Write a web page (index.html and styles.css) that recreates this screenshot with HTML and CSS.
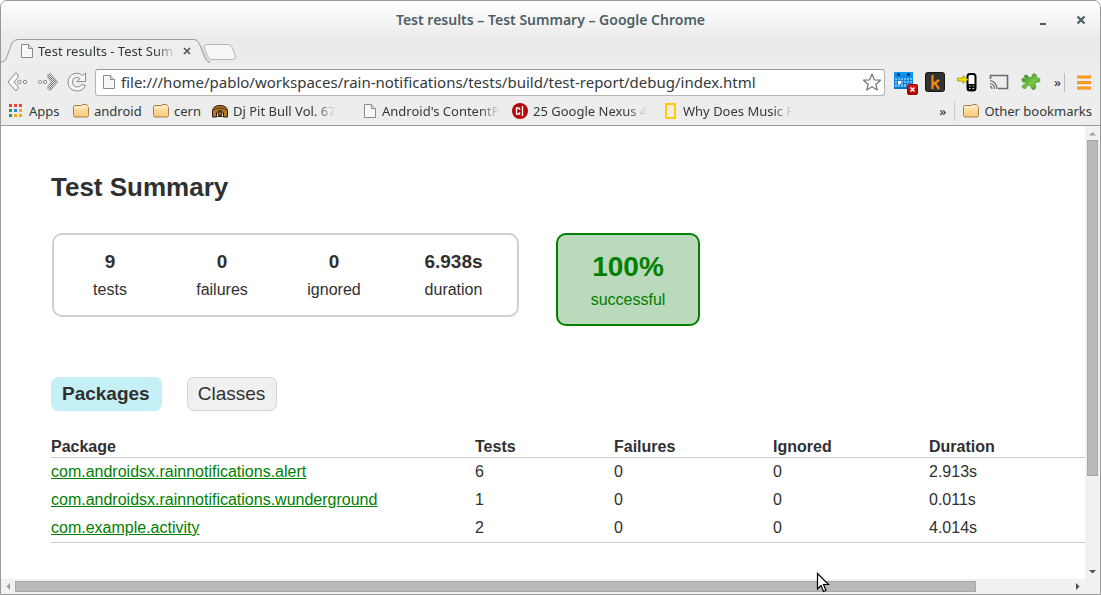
FILE: index.html
```html
<!DOCTYPE html>
<html lang="en">
<head>
<meta charset="utf-8">
<title>Test results - Test Summary</title>
<link rel="stylesheet" href="styles.css">
</head>
<body>
<svg class="defs" width="0" height="0" aria-hidden="true">
  <defs>
    <linearGradient id="folderFill" x1="0" y1="0" x2="0" y2="1"><stop offset="0" stop-color="#ffe9bd"/><stop offset="1" stop-color="#f9c877"/></linearGradient>
    <linearGradient id="greenFill" x1="0" y1="0" x2="1" y2="1"><stop offset="0" stop-color="#2f8a26"/><stop offset=".55" stop-color="#7cc843"/><stop offset="1" stop-color="#3e9a2f"/></linearGradient>
    <linearGradient id="calFill" x1="0" y1="0" x2="0" y2="1"><stop offset="0" stop-color="#0a98f5"/><stop offset="1" stop-color="#0a6fcf"/></linearGradient>
    <linearGradient id="badgeFill" x1="0" y1="0" x2="0" y2="1"><stop offset="0" stop-color="#e21a1a"/><stop offset="1" stop-color="#a80000"/></linearGradient>
    <pattern id="checker" width="2" height="2" patternUnits="userSpaceOnUse"><rect width="2" height="2" fill="#e6e6e6"/><rect width="1" height="1" fill="#777"/><rect x="1" y="1" width="1" height="1" fill="#777"/></pattern>
    <symbol id="folder" viewBox="0 0 16 14">
      <path d="M.5 11.500V2.500Q.5 1.500 1.500 1.500H8.500L9.500.5H13.500L14.500 1.500V2.500Q15.500 2.500 15.500 3.500V11.500Q15.500 13 14 13H2Q.5 13 .5 11.500Z" fill="url(#folderFill)" stroke="#a2814c"/>
      <path d="M1.500 3.500H9L10.500 2.500H14.500" fill="none" stroke="#fff3d8"/>
    </symbol>
    <symbol id="page" viewBox="0 0 12 14">
      <path d="M.5.5H7.500L11.500 4.500V13.500H.5Z" fill="#f8f8f8" stroke="#8b8b8b"/>
      <path d="M7.500.5V4.500H11.500" fill="#ddd" stroke="#8b8b8b"/>
    </symbol>
  </defs>
</svg>
<div class="window">
  <header class="titlebar">
    <div class="window-title">Test results – Test Summary – Google Chrome</div>
    <div class="window-controls">
      <button class="plain" aria-label="Minimize"><svg width="8" height="10"><path d="M1 9H7" stroke="#455a64" stroke-width="2"/></svg></button>
      <button class="plain" aria-label="Close window"><svg width="10" height="10"><path d="M1.500 1.500L8.500 8.500M8.500 1.500L1.500 8.500" stroke="#52636b" stroke-width="2.400"/></svg></button>
    </div>
  </header>

  <div class="tabstrip">
    <div class="browser-tab">
      <svg class="tab-shape" width="210" height="25" viewBox="0 0 210 25">
        <path d="M0 25Q4 24 5 21L11 5Q13 1.500 17 1.500H193Q196 1.500 198 5L204 20Q206 24 209 25Z" fill="#eeeeee"/>
        <path d="M0 24Q4 24 5 21L11 5Q13 1.500 17 1.500H193Q196 1.500 198 5L204 20Q206 24.500 209 24.500" fill="none" stroke="#999"/>
        <path d="M200 7L205 19Q207 23.500 210 23.500" fill="none" stroke="#c8c8c8"/>
      </svg>
      <svg class="tab-icon" width="12" height="14"><use href="#page"/></svg>
      <span class="tab-title fade">Test results - Test Sum</span>
      <button class="plain tab-close" aria-label="Close tab"><svg width="8" height="8"><path d="M1 1L7 7M7 1L1 7" stroke="#555" stroke-width="1.700"/></svg></button>
    </div>
    <button class="plain new-tab" aria-label="New tab"><svg width="34" height="18" viewBox="0 0 34 18"><path d="M4 1.500H25Q28 1.500 29 4L32.500 13Q33 16.500 30 16.500H9Q6 16.500 5 14L1.500 5Q.5 1.500 4 1.500Z" fill="#f7f7f7" stroke="#b5b5b5"/></svg></button>
  </div>

  <div class="toolbar">
    <button class="plain" aria-label="Back"><svg width="22" height="20" viewBox="0 0 22 20"><path d="M9 .8L1 10L9 19L11 16.500V14.500L7 10L11 5.500V3Z" fill="#fafafa" stroke="#858585"/><circle cx="12.500" cy="10" r="1.700" fill="#fff" stroke="#888"/><circle cx="18" cy="10" r="1.700" fill="#fff" stroke="#888"/></svg></button>
    <button class="plain" aria-label="Forward"><svg width="22" height="20" viewBox="0 0 22 20"><path d="M13 .8L21 10L13 19L10.500 16.500V14.500L14 10L10.500 5.500V3Z" fill="url(#checker)" stroke="#a5a5a5" stroke-width=".6"/><circle cx="3" cy="10" r="1.700" fill="#eee" stroke="#999"/><circle cx="8" cy="10" r="1.700" fill="#eee" stroke="#888"/></svg></button>
    <button class="plain" aria-label="Reload"><svg width="20" height="20" viewBox="0 0 20 20"><path d="M15.500 3.500L18.500 1V9.500H10L13 6.500Q9.500 4 6.500 6.500Q4 10 6.500 13.500Q11 17 15 12.500L18.500 13.500Q16 19 10 19Q1 18 1 10Q2 2 9.500 1.200Q13 1 15.500 3.500Z" fill="#f7f7f7" stroke="#8c8c8c" stroke-linejoin="round"/></svg></button>
    <div class="omnibox">
      <svg width="12" height="14"><use href="#page"/></svg>
      <input class="url" type="text" aria-label="Address" value="file:///home/pablo/workspaces/rain-notifications/tests/build/test-report/debug/index.html">
      <button class="plain" aria-label="Bookmark this page"><svg width="20" height="18" viewBox="0 0 20 18"><path d="M10 1L12.300 6.800L18.500 7.200L13.700 11.200L15.300 17L10 13.800L4.700 17L6.300 11.200L1.500 7.200L7.700 6.800Z" fill="#fff" stroke="#777" stroke-width="1.200" stroke-linejoin="round"/></svg></button>
    </div>
    <div class="extensions">
      <button class="plain calendar" aria-label="Calendar"><svg width="26" height="24" viewBox="0 0 26 24"><path d="M1 1H20V18H1Z" fill="url(#calFill)"/><path d="M2 7H19V16H2Z" fill="#69c3f8"/><path d="M2 9.500H19M2 12.500H19M4.500 7V16M7.500 7V16M10.500 7V16M13.500 7V16M16.500 7V16" stroke="#1680d6"/><path d="M5 10H8V13H5Z" fill="#fff"/><circle cx="5.500" cy="3.500" r="1.500" fill="#12365a"/><circle cx="15.500" cy="3.500" r="1.500" fill="#12365a"/><rect x="14.500" y="13.500" width="10" height="10" rx="1.500" fill="url(#badgeFill)" stroke="#a40000"/><path d="M17.500 16.500L21.500 20.500M21.500 16.500L17.500 20.500" stroke="#fff" stroke-width="1.500"/></svg></button>
      <button class="plain" aria-label="k extension"><svg width="20" height="20" viewBox="0 0 20 20"><rect x=".5" y=".5" width="19" height="19" rx="2" fill="#333" stroke="#161616"/><path d="M7.500 3V17M14 8L8 12.500M10 11L14 17" fill="none" stroke="#f0860f" stroke-width="2.300"/></svg></button>
      <button class="plain" aria-label="Send to phone"><svg width="20" height="20" viewBox="0 0 20 20"><rect x="10.500" y="2" width="8" height="16.500" rx="2.500" fill="#fff" stroke="#000" stroke-width="2"/><path d="M10 12H19V17Q19 19 17 19H12Q10 19 10 17Z"/><path d="M12 14H13.500M15.500 14H17M12 16.500H13.500M15.500 16.500H17" stroke="#eee" stroke-width="1.200"/><path d="M.5 6H6V3.500L11 7.500L6 11.500V9H.5Z" fill="#f8df05" stroke="#a69200" stroke-width=".8"/></svg></button>
      <button class="plain" aria-label="Cast"><svg width="20" height="16" viewBox="0 0 20 16"><path d="M1.500 5V1.500H18.500V14.500H9" fill="none" stroke="#6b6b6b" stroke-width="1.600"/><path d="M1 6.500A8.500 8.500 0 0 1 8 15M1 9.500A5.500 5.500 0 0 1 5.500 15M1 12A3 3 0 0 1 3 15" fill="none" stroke="#666" stroke-width="1.200"/></svg></button>
      <button class="plain" aria-label="Puzzle extension"><svg width="20" height="18" viewBox="0 0 20 18"><path d="M3 3Q5 1 7 3L8 5L11 4Q11 0 14 1Q17 2 14.500 5.500Q19 4 19 7Q19 10 14.500 9L14 12Q16 14 14 16Q11 18 10 14L9 12L6 13Q5 17 2 15Q0 12 4 11.500L5 9Q1 10 .8 7Q1 4 5 6Z" fill="url(#greenFill)" stroke="#479331" stroke-width=".7"/></svg></button>
    </div>
    <div class="toolbar-end">
      <button class="plain overflow" aria-label="More extensions">»</button>
      <button class="plain menu" aria-label="Menu"><svg width="14" height="15" viewBox="0 0 14 15"><path d="M0 2H14M0 7.500H14M0 13H14" stroke="#f28b0c" stroke-width="3"/><path d="M0 2H14M0 7.500H14M0 13H14" stroke="#ffac3d"/></svg></button>
    </div>
  </div>

  <nav class="bookmarks" aria-label="Bookmarks">
    <a href="#" class="bm bm-apps"><svg width="14" height="14" viewBox="0 0 14 14"><path d="M0 0H3V3H0ZM5 0H8V3H5ZM10 0H13V3H10Z" fill="#ee4035"/><path d="M0 5H3V8H0ZM0 10H3V13H0Z" fill="#1fa05a"/><path d="M5 5H8V8H5Z" fill="#347df0"/><path d="M10 5H13V8H10ZM5 10H8V13H5ZM10 10H13V13H10Z" fill="#f6ad0c"/></svg>Apps</a>
    <a href="#" class="bm bm-android"><svg width="16" height="14"><use href="#folder"/></svg>android</a>
    <a href="#" class="bm bm-cern"><svg width="16" height="14"><use href="#folder"/></svg>cern</a>
    <a href="#" class="bm bm-dj"><svg width="16" height="13" viewBox="0 0 16 13"><path d="M.5 12V6Q1 .5 8 .5T15.500 6V12H11.500V8Q10 5.500 8 5.500T4.500 8V12Z" fill="#b7771f" stroke="#26160a"/><path d="M2 5Q8 1 14 5" fill="none" stroke="#4a2b08"/><circle cx="8" cy="8.500" r="2" fill="#a9691c" stroke="#24140a"/><path d="M5 12L7 10H9L11 12Z" fill="#2c1a0a"/></svg><span class="fade">Dj Pit Bull Vol. 67</span></a>
    <a href="#" class="bm bm-content"><svg width="12" height="14"><use href="#page"/></svg><span class="fade">Android's ContentP</span></a>
    <a href="#" class="bm bm-nexus"><svg width="16" height="16" viewBox="0 0 16 16"><circle cx="8" cy="8" r="8" fill="#b60606"/><path d="M7.500 5H4.500V11H7.500V9M7.500 5V7M10.500 3V13" fill="none" stroke="#fff" stroke-width="1.400"/></svg><span class="fade">25 Google Nexus 4</span></a>
    <a href="#" class="bm bm-music"><svg width="12" height="16" viewBox="0 0 12 16"><path d="M1 1H10V15H1Z" fill="none" stroke="#fc0" stroke-width="2"/></svg><span class="fade">Why Does Music F</span></a>
    <button class="plain overflow bm-more" aria-label="More bookmarks">»</button>
    <a href="#" class="bm bm-other"><svg width="16" height="14"><use href="#folder"/></svg>Other bookmarks</a>
  </nav>

  <div class="viewport">
    <main class="page">
      <div class="report">
        <h1>Test Summary</h1>
        <div class="summary">
          <div class="counters">
            <div class="counter"><strong>9</strong><span>tests</span></div>
            <div class="counter"><strong>0</strong><span>failures</span></div>
            <div class="counter"><strong>0</strong><span>ignored</span></div>
            <div class="counter duration"><strong>6.938s</strong><span>duration</span></div>
          </div>
          <div class="rate"><strong>100%</strong><span>successful</span></div>
        </div>
        <div class="report-tabs">
          <button class="report-tab selected">Packages</button>
          <button class="report-tab">Classes</button>
        </div>
        <table>
          <colgroup><col class="c-package"><col class="c-tests"><col class="c-failures"><col class="c-ignored"><col></colgroup>
          <thead><tr><th>Package</th><th>Tests</th><th>Failures</th><th>Ignored</th><th>Duration</th></tr></thead>
          <tbody>
            <tr><td><a href="#">com.androidsx.rainnotifications.alert</a></td><td>6</td><td>0</td><td>0</td><td>2.913s</td></tr>
            <tr><td><a href="#">com.androidsx.rainnotifications.wunderground</a></td><td>1</td><td>0</td><td>0</td><td>0.011s</td></tr>
            <tr><td><a href="#">com.example.activity</a></td><td>2</td><td>0</td><td>0</td><td>4.014s</td></tr>
          </tbody>
        </table>
      </div>
    </main>
    <div class="scroll scroll-y">
      <svg width="15" height="14"><path d="M4 9.500H11L7.500 6Z" fill="#a0a0a0"/></svg>
      <div class="track"><div class="thumb"></div></div>
      <svg width="15" height="14"><path d="M4 5H11L7.500 8.500Z" fill="#505050"/></svg>
    </div>
    <div class="scroll scroll-x">
      <svg width="14" height="15"><path d="M9 4V11L5.500 7.500Z" fill="#a0a0a0"/></svg>
      <div class="track"><div class="thumb"></div></div>
      <svg width="14" height="15"><path d="M5 4V11L8.500 7.500Z" fill="#505050"/></svg>
    </div>
    <div class="corner"></div>
  </div>
  <svg class="cursor" width="14" height="21" viewBox="0 0 14 21"><path d="M1.500 1.500V17L5 13.500L7.500 19.500L10 18.500L7.500 12.500H12.500Z" fill="#fff" stroke="#000" stroke-width="1.200"/></svg>
</div>
</body>
</html>
```
FILE: styles.css
```css
* { box-sizing: border-box; }

body {
  margin: 0;
  background: #fff;
  font-family: "Noto Sans", sans-serif;
  font-size: 13px;
  color: #33393b;
}

svg { display: block; flex: none; }
.defs { position: absolute; }

.plain {
  display: flex;
  margin: 0;
  padding: 0;
  border: 0;
  background: none;
  color: inherit;
  font: inherit;
}

.window {
  position: relative;
  display: flex;
  flex-direction: column;
  height: 100vh;
  overflow: hidden;
  border: 1px solid #999;
  border-radius: 7px 7px 0 0;
  background: #ededed;
}

.titlebar {
  display: grid;
  grid-template-columns: 1fr auto 1fr;
  align-items: center;
  height: 37px;
  background: linear-gradient(#fff, #ebebeb);
}
.window-title {
  grid-column: 2;
  color: #4d5f67;
  font-size: 14px;
  font-weight: 600;
}
.window-controls {
  display: flex;
  justify-content: flex-end;
  gap: 29px;
  padding-right: 14px;
}

.tabstrip {
  display: flex;
  height: 25px;
  background: #ebebeb;
}
.browser-tab {
  position: relative;
  display: flex;
  align-items: center;
  width: 202px;
  padding-left: 20px;
}
.tab-shape { position: absolute; left: 0; top: 0; }
.tab-icon, .tab-title, .tab-close { position: relative; }
.tab-title { width: 138px; margin: 0 7px 0 5px; }
.new-tab { padding: 5px 0 0; }

.fade {
  overflow: hidden;
  white-space: nowrap;
  mask-image: linear-gradient(to left, transparent, #000 20px);
}

.toolbar {
  display: flex;
  align-items: center;
  height: 38px;
  gap: 8px;
  padding: 0 9px 0 6px;
}
.omnibox {
  display: flex;
  flex: 1;
  align-items: center;
  gap: 6px;
  height: 27px;
  padding: 0 2px 0 7px;
  border: 1px solid #b4b4b4;
  border-top-color: #999;
  border-radius: 3px;
  background: #fff;
}
.url {
  flex: 1;
  min-width: 0;
  padding: 0;
  border: 0;
  outline: 0;
  background: none;
  color: #33393b;
  font: 15px "Noto Sans", sans-serif;
}
.extensions {
  display: flex;
  align-items: center;
  gap: 12px;
}
.calendar { margin-right: -6px; padding-top: 2px; }
.toolbar-end {
  display: flex;
  align-items: center;
  gap: 3px;
  padding-left: 5px;
}
.overflow { font-weight: 500; }
.menu {
  padding: 2px 0 2px 12px;
  border-left: 1px solid #bbb;
}

.bookmarks {
  display: flex;
  align-items: center;
  height: 25px;
  padding: 0 8px 4px;
  border-bottom: 1px solid #999;
}
.bm {
  display: flex;
  align-items: center;
  gap: 5px;
  color: inherit;
  text-decoration: none;
  white-space: nowrap;
}
.bm-apps { width: 64px; gap: 6px; }
.bm-android { width: 80px; }
.bm-cern { width: 59px; }
.bm-dj { width: 142px; margin-right: 10px; }
.bm-content { width: 138px; margin-right: 10px; gap: 6px; }
.bm-nexus { width: 138px; margin-right: 15px; }
.bm-music { width: 136px; gap: 6px; }
.bm-more { margin-left: auto; }
.bm-other {
  height: 20px;
  margin-left: 8px;
  padding-left: 8px;
  border-left: 1px solid #ccc;
}

.viewport {
  display: grid;
  flex: 1;
  grid-template: minmax(0, 1fr) 15px / minmax(0, 1fr) 15px;
  min-height: 0;
  background: #fff;
}
.page {
  overflow: hidden;
  font-family: "Liberation Sans", Arial, sans-serif;
  font-size: 16px;
  line-height: 18px;
  color: #303030;
}
.report {
  width: 110%;
  padding: 46px 50px;
}
h1 {
  margin: 0 0 31px;
  font-size: 26px;
  line-height: 30px;
}
.summary {
  display: flex;
  align-items: flex-start;
  gap: 37px;
  margin-left: 1px;
}
.counters {
  display: flex;
  padding: 15px 0 16px;
  border: 2px solid #cfcfcf;
  border-radius: 10px;
}
.counter, .rate {
  display: flex;
  flex-direction: column;
  align-items: center;
}
.counter {
  width: 112px;
  gap: 8px;
}
.counter strong {
  font-size: 19px;
  line-height: 23px;
}
.duration { width: 127px; }
.rate {
  width: 144px;
  gap: 8px;
  padding: 15px 0;
  border: 2px solid #008000;
  border-radius: 10px;
  background: #bbd9bb;
  color: #008000;
}
.rate strong {
  font-size: 28px;
  line-height: 33px;
}
.report-tabs {
  display: flex;
  gap: 25px;
  margin: 51px 0 27px;
}
.report-tab {
  height: 34px;
  padding: 0 11px 0 10px;
  border: 1px solid #d4d4d4;
  border-radius: 7px;
  background: #f0f0f0;
  color: inherit;
  font: 19px/22px "Liberation Sans", Arial, sans-serif;
}
.report-tab.selected {
  border-color: #c5f0f5;
  background: #c5f0f5;
  font-weight: bold;
}
table {
  width: 100%;
  border-collapse: collapse;
  border-bottom: 1px solid #d0d0d0;
  table-layout: fixed;
}
.c-package { width: 424px; }
.c-tests { width: 139px; }
.c-failures { width: 159px; }
.c-ignored { width: 156px; }
th {
  padding: 0 0 1px;
  border-bottom: 1px solid #d0d0d0;
  text-align: left;
}
td { padding: 5px 0; }
td a { color: #008000; }

.scroll {
  display: flex;
  background: #f1f1f1;
}
.scroll-y { flex-direction: column; }
.scroll-x { grid-row: 2; }
.track { flex: 1; min-height: 0; }
.thumb { border: 1px solid #a8a8a8; background: #bababa; }
.scroll-y .thumb { height: 79%; margin: 0 2px; }
.scroll-x .thumb { width: 91%; height: 11px; margin: 2px 0; }
.corner { background: #f1f1f1; }

.cursor {
  position: absolute;
  left: 815px;
  top: 571px;
}
```
